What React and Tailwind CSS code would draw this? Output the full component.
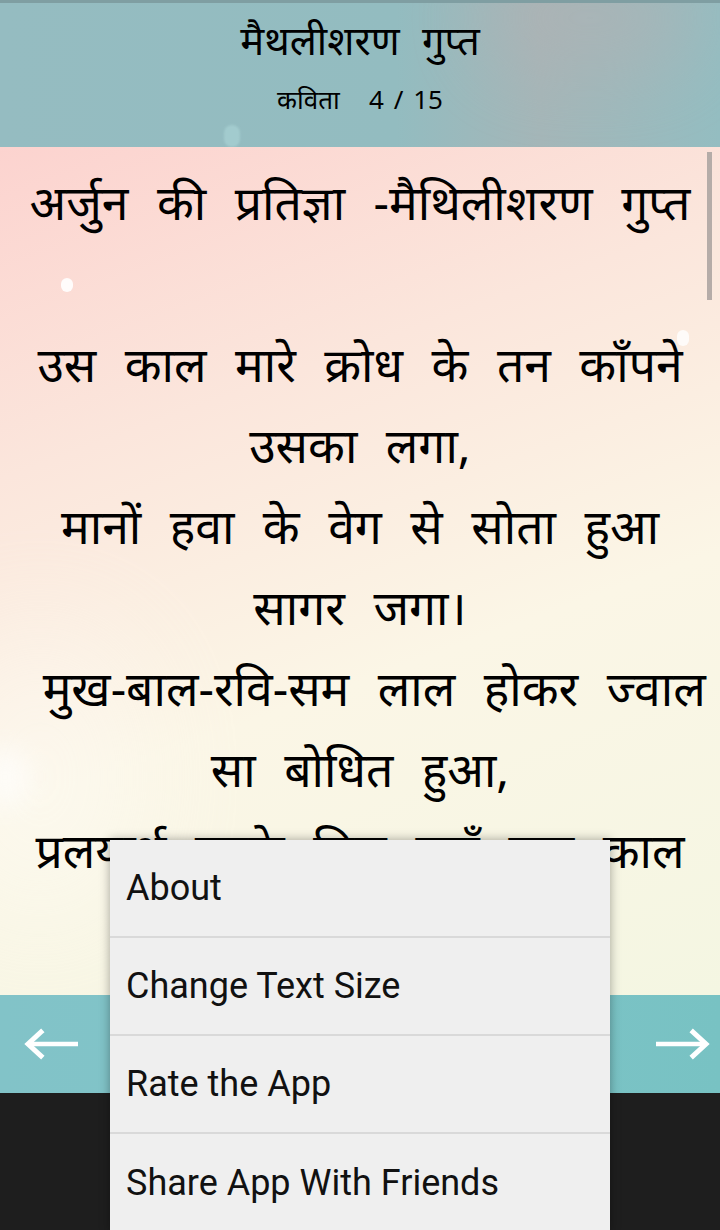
import React from "react";

const hindi = { fontFamily: '"Noto Sans", "Lohit Devanagari", "Noto Sans Devanagari", sans-serif' };
const roboto = { fontFamily: 'Roboto, "Noto Sans", sans-serif' };

function ArrowLeft() {
  return (
    <svg width="58" height="32" viewBox="0 0 58 32" fill="none">
      <path d="M56 16H7" stroke="white" strokeWidth="4.5" />
      <path d="M19 4L6 16L19 28" stroke="white" strokeWidth="5" strokeLinecap="square" />
    </svg>
  );
}
function ArrowRight() {
  return (
    <svg width="58" height="32" viewBox="0 0 58 32" fill="none">
      <path d="M2 16H51" stroke="white" strokeWidth="4.5" />
      <path d="M39 4L52 16L39 28" stroke="white" strokeWidth="5" strokeLinecap="square" />
    </svg>
  );
}

const lines = [
  "अर्जुन की प्रतिज्ञा -मैथिलीशरण गुप्त",
  "\u00a0",
  "उस काल मारे क्रोध के तन काँपने",
  "उसका लगा,",
  "मानों हवा के वेग से सोता हुआ",
  "सागर जगा।",
  "\u00a0मुख-बाल-रवि-सम लाल होकर ज्वाल",
  "सा बोधित हुआ,",
  "प्रलयार्थ उनके मिस वहाँ क्या काल",
  "ही क्रोधित हुआ?",
];

export default function App() {
  return (
    <div className="relative w-[720px] h-[1230px] overflow-hidden bg-[#1e1e1e]">
      {/* Header */}
      <div className="relative h-[147px] border-t-[3px] border-[#7f9ea2] bg-[linear-gradient(90deg,#95bcc1_0%,#93bcc0_55%,#a4b6b8_75%,#94bdc1_100%)] flex flex-col items-center overflow-hidden">
        <div className="absolute left-[480px] top-[-40px] w-[220px] h-[110px] rounded-full bg-[#b9aeb0] opacity-40 blur-2xl" />
        <div className="absolute left-[224px] top-[122px] w-[16px] h-[22px] rounded-full bg-[#a9d2d4] opacity-70 blur-[1px]" />
        <div className="relative mt-[10px] text-[40px] leading-[54px] text-black [word-spacing:12px]" style={hindi}>मैथलीशरण गुप्त</div>
        <div className="relative mt-[16px] text-[26px] leading-[32px] text-black whitespace-pre [word-spacing:3px]" style={hindi}>{"कविता   4 / 15"}</div>
      </div>

      {/* Content */}
      <div className="relative h-[848px] overflow-hidden bg-[linear-gradient(160deg,#fcd3cf_0%,#fbe6dc_30%,#fbf6e6_60%,#f4f6e2_100%)]">
        <div className="absolute left-[-60px] top-[480px] w-[200px] h-[300px] rounded-full bg-white opacity-30 blur-3xl" />
        <div className="absolute left-[-20px] top-[600px] w-[50px] h-[60px] rounded-full bg-white opacity-60 blur-md" />
        <div className="absolute left-[61px] top-[131px] w-[12px] h-[14px] rounded-full bg-white opacity-90" />
        <div className="absolute left-[677px] top-[183px] w-[12px] h-[16px] rounded-full bg-white opacity-80" />
        <div className="absolute right-[8px] top-[5px] w-[5px] h-[148px] bg-[#b5aca8]" />
        <div className="relative flex flex-col items-center pt-[14px] text-black text-[48px] leading-[81px] whitespace-pre [word-spacing:16px]" style={hindi}>
          {lines.map((l, i) => (
            <div key={i}>{l}</div>
          ))}
        </div>
      </div>

      {/* Bottom bar */}
      <div className="h-[98px] bg-[linear-gradient(90deg,#82c3c8_0%,#7ec4c8_50%,#78c2c3_100%)] flex items-center justify-between pl-[22px] pr-[8px]">
        <ArrowLeft />
        <ArrowRight />
      </div>

      {/* Popup menu */}
      <div className="absolute left-[110px] top-[840px] w-[500px] bg-[#efefef] shadow-[0_0_10px_rgba(0,0,0,0.35)] text-[#111] text-[36px]" style={roboto}>
        {["About", "Change Text Size", "Rate the App", "Share App With Friends"].map((t, i) => (
          <div key={t} className={"h-[98px] flex items-center pl-[16px] " + (i < 3 ? "border-b-2 border-[#d9d9d9]" : "")}>
            {t}
          </div>
        ))}
      </div>
    </div>
  );
}
